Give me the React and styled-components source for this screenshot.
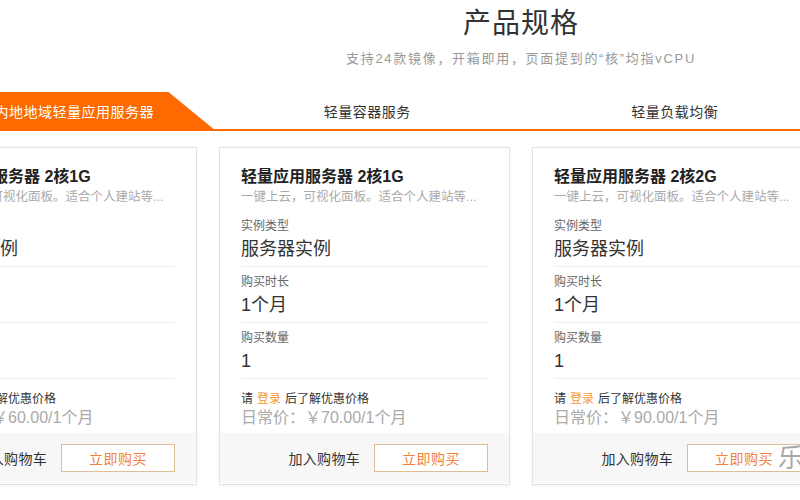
import React from "react";
import styled, { createGlobalStyle } from "styled-components";

const Global = createGlobalStyle`
  html, body { margin: 0; padding: 0; background: #fff; }
  body {
    width: 800px; height: 500px; overflow: hidden; position: relative;
    font-family: "Liberation Sans", "Noto Sans CJK SC", sans-serif;
    color: #333;
  }
`;

const Page = styled.div`
  width: 1230px;
  margin-left: -94px;
`;

const Header = styled.header`
  display: flex;
  flex-direction: column;
  align-items: center;
  padding-top: 2px;
`;

const Title = styled.h1`
  margin: 0;
  font-size: 28px;
  line-height: 44px;
  font-weight: 400;
  color: #333;
  letter-spacing: 1px;
`;

const Subtitle = styled.p`
  margin: 3px 0 0;
  font-size: 13px;
  line-height: 20px;
  color: #9a9a9a;
  letter-spacing: 1.7px;
`;

const Tabs = styled.nav`
  display: grid;
  grid-template-columns: repeat(4, 1fr);
  margin-top: 23px;
  border-bottom: 2px solid #ff6a00;
`;

const Tab = styled.div`
  height: 37px;
  display: flex;
  align-items: center;
  justify-content: center;
  font-size: 14px;
  letter-spacing: 0.5px;
  color: ${(p) => (p.$active ? "#fff" : "#333")};
  background: ${(p) => (p.$active ? "#ff6a00" : "transparent")};
  clip-path: ${(p) =>
    p.$active ? "polygon(0 0, calc(100% - 45px) 0, 100% 100%, 0 100%)" : "none"};
`;

const Cards = styled.section`
  display: grid;
  grid-template-columns: repeat(4, 291px);
  gap: 22px;
  margin-top: 16px;
`;

const Card = styled.article`
  height: 338px;
  box-sizing: border-box;
  border: 1px solid #e3e3e3;
  box-shadow: 0 1px 3px rgba(0, 0, 0, 0.05);
  display: flex;
  flex-direction: column;
  background: #fff;
`;

const Body = styled.div`
  padding: 18px 21px 0;
  flex: 1;
`;

const CardTitle = styled.h3`
  margin: 0;
  font-size: 16px;
  line-height: 22px;
  font-weight: 700;
  color: #222;
`;

const Desc = styled.p`
  margin: 0 0 5px;
  font-size: 12.5px;
  line-height: 18px;
  color: #aaa;
  white-space: nowrap;
  overflow: hidden;
`;

const Field = styled.div`
  padding: 6px 0 3px;
  border-bottom: 1px solid #eee;
`;

const Label = styled.div`
  font-size: 12px;
  line-height: 18px;
  color: #666;
`;

const Value = styled.div`
  font-size: 18px;
  line-height: 28px;
  color: #333;
`;

const Login = styled.div`
  margin-top: 11px;
  font-size: 12px;
  line-height: 18px;
  color: #333;
`;

const LoginLink = styled.span`
  color: #f39a3a;
  margin: 0 4px;
`;

const Price = styled.div`
  font-size: 16px;
  line-height: 20px;
  color: #aaa;
`;

const Footer = styled.div`
  height: 50px;
  background: #f7f7f7;
  display: flex;
  align-items: center;
  justify-content: flex-end;
  gap: 14px;
  padding: 0 21px;
  margin-bottom: 1px;
`;

const CartLink = styled.span`
  font-size: 14px;
  color: #333;
  letter-spacing: 0.3px;
`;

const BuyButton = styled.button`
  width: 114px;
  height: 28px;
  border: 1px solid #dfbd96;
  background: #fff;
  color: #f08240;
  font-family: inherit;
  font-size: 14px;
  letter-spacing: 0.5px;
  padding: 0;
  cursor: pointer;
`;

const Watermark = styled.div`
  position: absolute;
  left: 778px;
  top: 441px;
  font-size: 26px;
  line-height: 30px;
  color: rgba(110, 110, 110, 0.6);
  font-family: "Noto Sans CJK SC", sans-serif;
`;

const products = [
  { title: "轻量应用服务器 2核1G", price: "60.00" },
  { title: "轻量应用服务器 2核1G", price: "70.00" },
  { title: "轻量应用服务器 2核2G", price: "90.00" },
  { title: "轻量应用服务器 2核4G", price: "120.00" },
];

const tabs = ["中国内地地域轻量应用服务器", "轻量容器服务", "轻量负载均衡", "海外地域轻量应用服务器"];

export default function App() {
  return (
    <>
      <Global />
      <Page>
        <Header>
          <Title>产品规格</Title>
          <Subtitle>支持24款镜像，开箱即用，页面提到的“核”均指vCPU</Subtitle>
        </Header>
        <Tabs>
          {tabs.map((t, i) => (
            <Tab key={t} $active={i === 0}>
              {t}
            </Tab>
          ))}
        </Tabs>
        <Cards>
          {products.map((p, i) => (
            <Card key={i}>
              <Body>
                <CardTitle>{p.title}</CardTitle>
                <Desc>一键上云，可视化面板。适合个人建站等...</Desc>
                <Field>
                  <Label>实例类型</Label>
                  <Value>服务器实例</Value>
                </Field>
                <Field>
                  <Label>购买时长</Label>
                  <Value>1个月</Value>
                </Field>
                <Field>
                  <Label>购买数量</Label>
                  <Value>1</Value>
                </Field>
                <Login>
                  请<LoginLink>登录</LoginLink>后了解优惠价格
                </Login>
                <Price>日常价：￥{p.price}/1个月</Price>
              </Body>
              <Footer>
                <CartLink>加入购物车</CartLink>
                <BuyButton>立即购买</BuyButton>
              </Footer>
            </Card>
          ))}
        </Cards>
      </Page>
      <Watermark>乐</Watermark>
    </>
  );
}
